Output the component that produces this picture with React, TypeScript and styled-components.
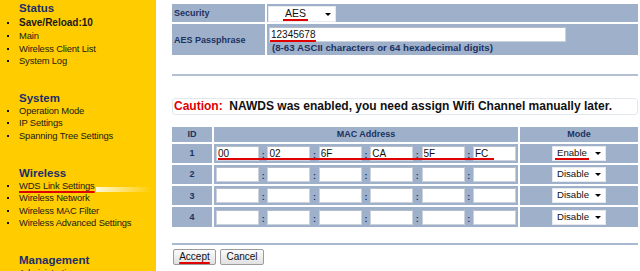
import React from "react";
import styled, { createGlobalStyle } from "styled-components";

const GlobalStyle = createGlobalStyle`
  * { box-sizing: border-box; }
  body {
    margin: 0;
    background: #fff;
    font-family: "Liberation Sans", Arial, sans-serif;
  }
`;

const Page = styled.div`
  display: flex;
  width: 640px;
  height: 271px;
  overflow: hidden;
`;

/* ---------- sidebar ---------- */

const Sidebar = styled.nav`
  width: 156px;
  flex-shrink: 0;
  background: #ffcc00;
  padding-top: 0.5px;
`;

const Group = styled.div`
  margin-bottom: 23px;
`;

const Heading = styled.div`
  padding-left: 19px;
  font-size: 11.5px;
  font-weight: 700;
  line-height: 14px;
  color: #1b2f6b;
`;

const Item = styled.div<{ $bold?: boolean; $active?: boolean }>`
  position: relative;
  padding-left: 19px;
  font-size: ${(p) => (p.$bold ? "10px" : "9.4px")};
  font-weight: ${(p) => (p.$bold ? 700 : 400)};
  letter-spacing: ${(p) => (p.$bold ? "0" : "-0.15px")};
  margin-top: ${(p) => (p.$bold ? "2.9px" : "0")};
  line-height: 12.6px;
  color: #1a1a1a;
  white-space: nowrap;

  &::before {
    content: "";
    position: absolute;
    left: 7px;
    top: 5px;
    width: 2px;
    height: 2px;
    background: #111;
  }

  ${(p) =>
    p.$active &&
    `
    span {
      text-decoration: underline #e00000 2px;
      text-underline-offset: 1.5px;
      text-decoration-skip-ink: none;
    }
    &::after {
      content: "";
      position: absolute;
      left: 96px;
      top: 7px;
      width: 56px;
      height: 5px;
      background: linear-gradient(to right, rgba(255,255,255,0.85), rgba(255,255,255,0));
    }
  `}
`;

/* ---------- main ---------- */

const Main = styled.main`
  flex: 1;
  padding: 4px 2px 0 16px;
`;

const FormTable = styled.div`
  display: grid;
  grid-template-columns: 93px 1fr;
  grid-template-rows: 18px 31px;
  gap: 2px;
`;

const LabelCell = styled.div`
  display: flex;
  align-items: center;
  padding-left: 2px;
  background: #9fb1ca;
  font-size: 9px;
  font-weight: 700;
  color: #1c3261;
`;

const ValueCell = styled.div<{ $pad: string }>`
  position: relative;
  background: #9fb1ca;
  padding: ${(p) => p.$pad};
`;

const SelectBox = styled.div<{ $w: number; $h: number; $size: number; $pad: number }>`
  display: flex;
  align-items: center;
  width: ${(p) => p.$w}px;
  height: ${(p) => p.$h}px;
  padding-left: ${(p) => p.$pad}px;
  padding-right: 4px;
  background: #fff;
  border: 1px solid #e6e9ee;
  font-size: ${(p) => p.$size}px;
  color: #111;
`;

const SelectValue = styled.span<{ $mark?: boolean }>`
  flex: 1;
  line-height: 12px;

  span {
    display: inline-block;
    padding: 0 2px;
    margin-left: -2px;
    border-bottom: 2px solid ${(p) => (p.$mark ? "#e00000" : "transparent")};
    line-height: 11px;
  }
`;

const Caret = styled.span`
  width: 0;
  height: 0;
  border-left: 3px solid transparent;
  border-right: 3px solid transparent;
  border-top: 3px solid #000;
`;

const TextInput = styled.input<{ $w: number }>`
  display: block;
  width: ${(p) => p.$w}px;
  height: 15px;
  margin: 0;
  padding: 0 1px;
  border: 1px solid #cbd2dc;
  border-top-color: #b4bcc8;
  background: #fff;
  font-family: "Liberation Sans", Arial, sans-serif;
  font-size: 10px;
  color: #111;
  outline: none;
`;

const RedMark = styled.span<{ $left: number; $top: number; $w: number }>`
  position: absolute;
  left: ${(p) => p.$left}px;
  top: ${(p) => p.$top}px;
  width: ${(p) => p.$w}px;
  height: 2px;
  background: #e00000;
`;

const Hint = styled.div`
  padding-left: 3px;
  font-size: 9.7px;
  font-weight: 700;
  line-height: 12px;
  color: #1c3261;
  white-space: nowrap;
`;

const Rule = styled.div<{ $top: number; $color: string }>`
  margin-top: ${(p) => p.$top}px;
  height: 2px;
  background: ${(p) => p.$color};
`;

const Caution = styled.div`
  margin-top: 22px;
  height: 17px;
  padding-left: 1px;
  border: 1px solid #e3e7ee;
  border-radius: 3px;
  font-size: 12px;
  font-weight: 700;
  line-height: 15px;
  color: #111;
  white-space: nowrap;

  em {
    font-style: normal;
    color: #e00000;
  }
`;

const MacGrid = styled.div`
  margin-top: 12px;
  display: grid;
  grid-template-columns: 40px 304px 1fr;
  grid-template-rows: 14.5px repeat(4, 19.3px);
  gap: 2px;
`;

const HeadCell = styled.div`
  display: flex;
  align-items: center;
  justify-content: center;
  background: #9fb1ca;
  font-size: 9px;
  font-weight: 700;
  color: #1c3261;
`;

const MacCell = styled.div`
  position: relative;
  display: flex;
  align-items: center;
  padding-left: 2px;
  background: #9fb1ca;
`;

const Colon = styled.span`
  width: 8.4px;
  text-align: center;
  font-size: 9px;
  font-weight: 700;
  line-height: 9px;
  padding-top: 4px;
  color: #1c3261;
`;

const ModeCell = styled.div`
  display: flex;
  align-items: center;
  justify-content: center;
  background: #9fb1ca;
`;

const Buttons = styled.div`
  margin-top: 4px;
  margin-left: 1px;
  display: flex;
  gap: 4px;
`;

const Button = styled.button<{ $w: number; $mark?: boolean }>`
  width: ${(p) => p.$w}px;
  height: 16px;
  padding: 0;
  border: 1px solid #9b9b9b;
  border-radius: 2px;
  background: linear-gradient(#fbfbfb, #e1e1e1);
  font-family: "Liberation Sans", Arial, sans-serif;
  font-size: 10px;
  line-height: 12px;
  color: #111;

  span {
    text-decoration: ${(p) => (p.$mark ? "underline #e00000 2px" : "none")};
    text-underline-offset: 1.5px;
    text-decoration-skip-ink: none;
  }
`;

const menu = [
  { title: "Status", items: ["Save/Reload:10", "Main", "Wireless Client List", "System Log"] },
  { title: "System", items: ["Operation Mode", "IP Settings", "Spanning Tree Settings"] },
  {
    title: "Wireless",
    items: ["WDS Link Settings", "Wireless Network", "Wireless MAC Filter", "Wireless Advanced Settings"],
  },
  { title: "Management", items: ["Administration"] },
];

const macRows = [
  { id: 1, mac: ["00", "02", "6F", "CA", "5F", "FC"], mode: "Enable" },
  { id: 2, mac: ["", "", "", "", "", ""], mode: "Disable" },
  { id: 3, mac: ["", "", "", "", "", ""], mode: "Disable" },
  { id: 4, mac: ["", "", "", "", "", ""], mode: "Disable" },
];

export default function App() {
  return (
    <>
      <GlobalStyle />
      <Page>
        <Sidebar>
          {menu.map((g) => (
            <Group key={g.title}>
              <Heading>{g.title}</Heading>
              {g.items.map((it) => (
                <Item key={it} $bold={it.startsWith("Save")} $active={it === "WDS Link Settings"}>
                  <span>{it}</span>
                </Item>
              ))}
            </Group>
          ))}
        </Sidebar>

        <Main>
          <FormTable>
            <LabelCell>Security</LabelCell>
            <ValueCell $pad="2px 0 0 1px">
              <SelectBox $w={68} $h={16} $size={10.5} $pad={16}>
                <SelectValue $mark>
                  <span>AES</span>
                </SelectValue>
                <Caret />
              </SelectBox>
            </ValueCell>
            <LabelCell>AES Passphrase</LabelCell>
            <ValueCell $pad="3px 0 1px 2px">
              <TextInput $w={297} readOnly value="12345678" />
              <RedMark $left={3} $top={16} $w={46} />
              <Hint>(8-63 ASCII characters or 64 hexadecimal digits)</Hint>
            </ValueCell>
          </FormTable>

          <Rule $top={19} $color="#b3c0d3" />

          <Caution>
            <em>Caution:</em>&nbsp; NAWDS was enabled, you need assign Wifi Channel manually later.
          </Caution>

          <MacGrid>
            <HeadCell>ID</HeadCell>
            <HeadCell>MAC Address</HeadCell>
            <HeadCell>Mode</HeadCell>
            {macRows.map((r) => (
              <React.Fragment key={r.id}>
                <HeadCell>{r.id}</HeadCell>
                <MacCell>
                  {r.mac.map((v, i) => (
                    <React.Fragment key={i}>
                      {i > 0 && <Colon>:</Colon>}
                      <TextInput $w={43} readOnly value={v} />
                    </React.Fragment>
                  ))}
                  {r.id === 1 && <RedMark $left={4} $top={14.5} $w={276} />}
                </MacCell>
                <ModeCell>
                  <SelectBox $w={54} $h={15} $size={9.6} $pad={4}>
                    <SelectValue $mark={r.mode === "Enable"}>
                      <span>{r.mode}</span>
                    </SelectValue>
                    <Caret />
                  </SelectBox>
                </ModeCell>
              </React.Fragment>
            ))}
          </MacGrid>

          <Rule $top={16} $color="#a9b9cf" />

          <Buttons>
            <Button $w={43} $mark>
              <span>Accept</span>
            </Button>
            <Button $w={44}>
              <span>Cancel</span>
            </Button>
          </Buttons>
        </Main>
      </Page>
    </>
  );
}
